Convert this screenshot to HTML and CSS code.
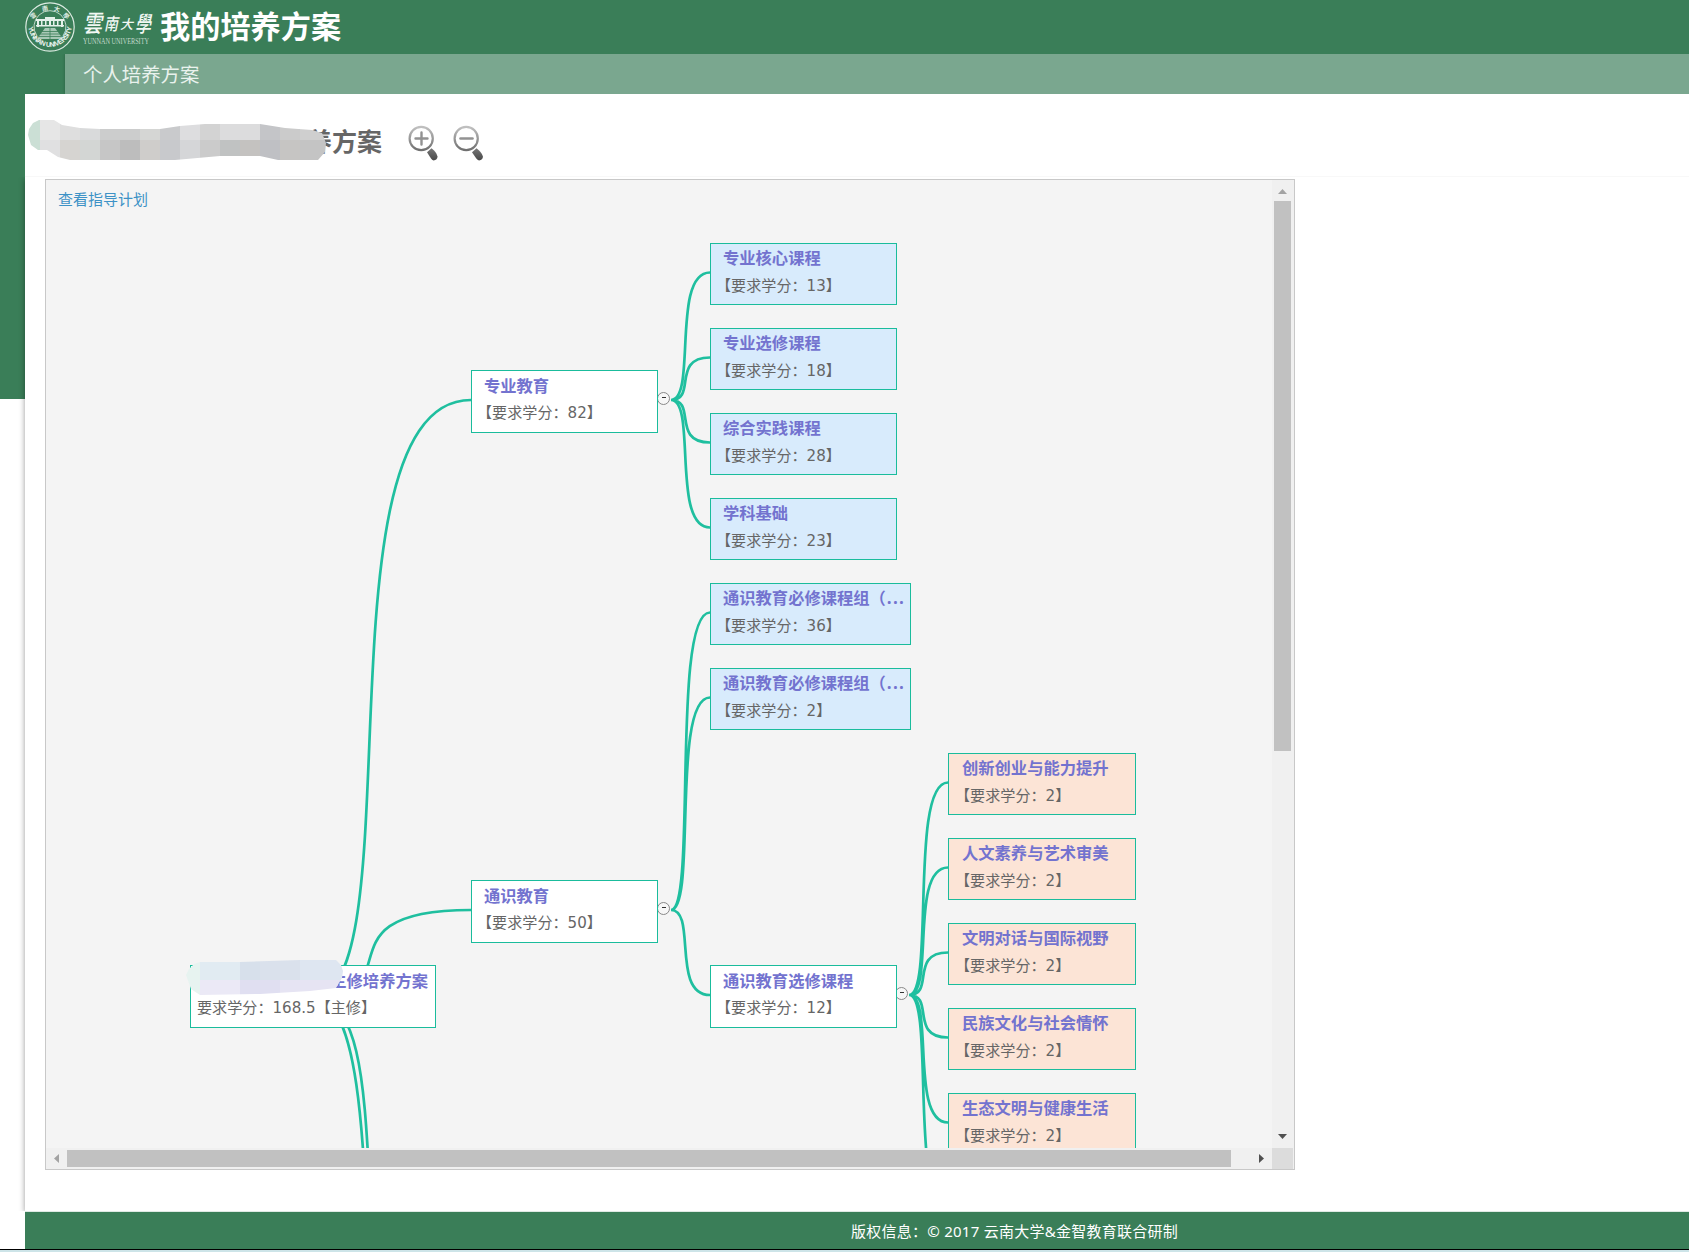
FILE: index.html
```html
<!DOCTYPE html>
<html lang="zh-CN">
<head>
<meta charset="utf-8">
<title>我的培养方案</title>
<link rel="stylesheet" href="styles.css">
</head>
<body>
<header class="header">
  <svg class="logo" width="132" height="54" viewBox="0 0 132 54">
    <defs>
      <path id="seal-low" d="M3.2 25A21.8 21.8 0 0 0 46.8 25"/>
    </defs>
    <g fill="none" stroke="#dcebe2">
      <circle cx="25" cy="27" r="24.2" stroke-width="1.2"/>
      <path d="M12 36A16 16 0 1 1 38 36" stroke-width=".8"/>
    </g>
    <g fill="#e4f0e9">
      <path d="M11 19h28v2H11zM20 17h10v2H20zM12 21h2v6h-2zm4 0h1.5v4H16zm4 0h1.5v4H20zm4 0h2v4h-2zm4 0h1.5v4H28zm4 0h1.5v4H32zm4 0h2v6h-2zM11 25h28v1.6H11z"/>
      <path d="M20 28h10l8 11H12z" opacity=".65"/>
    </g>
    <g stroke="#3a7e58" stroke-width=".8"><path d="M17 31.5h16M15 34h20M14 36.500h22M25 28v11"/></g>
    <text class="seal-en"><textPath href="#seal-low" startOffset="2" textLength="64">YUNNAN UNIVERSITY</textPath></text>
    <g class="seal-cn">
      <text x="5.500" y="18" transform="rotate(-40 8 16)">雲</text>
      <text x="17" y="11" transform="rotate(-12 19 9)">南</text>
      <text x="29" y="11" transform="rotate(14 31 9)">大</text>
      <text x="38" y="18" transform="rotate(38 41 16)">學</text>
    </g>
    <g class="brush">
      <text x="58" y="32" font-size="24" textLength="19" lengthAdjust="spacingAndGlyphs">雲</text>
      <text x="79" y="30" font-size="17" textLength="14" lengthAdjust="spacingAndGlyphs">南</text>
      <text x="95" y="28.500" font-size="13">大</text>
      <text x="110" y="32" font-size="22" textLength="16" lengthAdjust="spacingAndGlyphs">學</text>
    </g>
    <text class="logo-en" x="58" y="44" textLength="66" lengthAdjust="spacingAndGlyphs">YUNNAN UNIVERSITY</text>
  </svg>
  <h1 class="app-title">我的培养方案</h1>
</header>
<nav class="subnav"><span>个人培养方案</span></nav>

<main class="main">
  <div class="plan-head">
    <h2 class="plan-title">培养方案</h2>
    <svg class="mosaic" width="300" height="44" viewBox="27 118 300 44">
      <clipPath id="m1"><path d="M28 135L29 129 33 123 39 120H54L62 125 80 128 100 129H160L180 126 205 124H260L285 128 312 130 322 133 326 143 325 152 318 160H278L260 156H220L175 160H70L58 157 47 150H38L31 145Z"/></clipPath>
      <g clip-path="url(#m1)">
        <path fill="#cbdfd5" d="M20 120h20v40H20z"/>
        <path fill="#e6e6e6" d="M40 120h20v20H40z"/><path fill="#dedede" d="M60 120h20v20H60z"/><path fill="#d9dadb" d="M80 120h20v20H80z"/><path fill="#cccdcd" d="M100 120h40v20h-40z"/><path fill="#d5d6d4" d="M140 120h20v20h-20z"/><path fill="#c9cacc" d="M160 120h20v20h-20z"/><path fill="#dddddf" d="M180 120h20v20h-20z"/><path fill="#d3d3d3" d="M200 120h20v20h-20z"/><path fill="#dcdcdd" d="M220 120h40v20h-40z"/><path fill="#c4c5c8" d="M260 120h20v20h-20z"/><path fill="#cbcbcb" d="M280 120h20v20h-20z"/><path fill="#cfcfcf" d="M300 120h30v20h-30z"/>
        <path fill="#e0e0e1" d="M40 140h20v20H40z"/><path fill="#d6d4d1" d="M60 140h20v20H60z"/><path fill="#d3d6d4" d="M80 140h20v20H80z"/><path fill="#c6c6c6" d="M100 140h20v20h-20z"/><path fill="#bdbdbd" d="M120 140h20v20h-20z"/><path fill="#cfcdcb" d="M140 140h20v20h-20z"/><path fill="#c8c9cc" d="M160 140h20v20h-20z"/><path fill="#d5d6d8" d="M180 140h20v20h-20z"/><path fill="#cbcbcb" d="M200 140h20v20h-20z"/><path fill="#c0c2c2" d="M220 140h20v20h-20z"/><path fill="#c4c2c0" d="M240 140h20v20h-20z"/><path fill="#bfc0c4" d="M260 140h20v20h-20z"/><path fill="#c6c5c3" d="M280 140h20v20h-20z"/><path fill="#c4c4c4" d="M300 140h30v20h-30z"/>
      </g>
    </svg>
    <svg class="zoom" width="30" height="37" viewBox="0 0 30 37">
      <defs><linearGradient id="g" x1="0" y1="0" x2="0" y2="1"><stop offset="0" stop-color="#c0c0c0"/><stop offset="1" stop-color="#707070"/></linearGradient>
      <linearGradient id="h" x1="0" y1="0" x2="0" y2="1"><stop offset="0" stop-color="#777"/><stop offset="1" stop-color="#484848"/></linearGradient></defs>
      <circle cx="13.200" cy="13.500" r="11.600" fill="#fff" stroke="url(#g)" stroke-width="2.200"/>
      <path d="M7.500 13.500h12M13.500 7.500v12" stroke="#929292" stroke-width="2.400" stroke-linecap="round"/>
      <path d="M19 27.300L23.500 23.300Q28.500 27 29.500 31.500 29.500 35 25.500 35.500 24 35 23 33.500z" fill="url(#h)"/>
    </svg>
    <svg class="zoom" width="30" height="37" viewBox="0 0 30 37">
      <circle cx="13.200" cy="13.500" r="11.600" fill="#fff" stroke="url(#g)" stroke-width="2.200"/>
      <path d="M7.500 13.500h12" stroke="#929292" stroke-width="2.600" stroke-linecap="round"/>
      <path d="M19 27.300L23.500 23.300Q28.500 27 30 31.500 29.800 35 26 35.500 24.500 35 23.300 33.500z" fill="url(#h)"/>
    </svg>
  </div>
  <div class="plan-body">
    <section class="viewer">
      <div class="canvas">
        <a class="guide-link">查看指导计划</a>
        <svg class="links" width="1226" height="968" viewBox="46 180 1226 968">
          <path d="M312 997C417 997 312 400 471 400M312 997C417 997 312 910 471 910M312 997C417 997 312 1422 471 1422M312 997C417 997 312 1677 471 1677"/>
          <path d="M671 400C697 400 671 272.500 710 272.500M671 400C697 400 671 357.500 710 357.500M671 400C697 400 671 442.500 710 442.500M671 400C697 400 671 527.500 710 527.500"/>
          <path d="M671 910C697 910 671 612.500 710 612.500M671 910C697 910 671 697.500 710 697.500M671 910C697 910 671 995 710 995"/>
          <path d="M909 995C935 995 909 782.500 948 782.500M909 995C935 995 909 867.500 948 867.500M909 995C935 995 909 952.500 948 952.500M909 995C935 995 909 1037.500 948 1037.500M909 995C935 995 909 1122.500 948 1122.500M909 995C935 995 909 1207.500 948 1207.500"/>
        </svg>
        <i class="toggle" style="left:611px;top:212px"></i>
        <i class="toggle" style="left:611px;top:722px"></i>
        <i class="toggle" style="left:849px;top:807px"></i>
        <div class="node root" style="left:144px;top:785px"><b>主修培养方案</b><span>要求学分：168.5【主修】</span></div>
        <svg class="root-mosaic" width="158" height="36" viewBox="185 959 158 36">
          <clipPath id="m2"><path d="M186 975L189 969 194 964 200 962H240L300 960H336L341 965 343 971 342 978 336 988 310 991 260 994 200 995 191 989Z"/></clipPath>
          <g clip-path="url(#m2)">
            <path fill="#e7f3f0" d="M180 955h20v40h-20z"/><path fill="#e1ebf2" d="M200 955h40v25h-40z"/><path fill="#d7e0eb" d="M240 955h20v25h-20z"/><path fill="#dae1ec" d="M260 955h40v25h-40z"/><path fill="#dee6f1" d="M300 955h45v25h-45z"/>
            <path fill="#ebe9f6" d="M200 980h40v15h-40z"/><path fill="#e0dff1" d="M240 980h40v15h-40z"/><path fill="#e6e4f3" d="M280 980h65v15h-65z"/>
          </g>
        </svg>
        <div class="node" style="left:425px;top:190px"><b>专业教育</b><span>【要求学分：82】</span></div>
        <div class="node" style="left:425px;top:700px"><b>通识教育</b><span>【要求学分：50】</span></div>
        <div class="node" style="left:664px;top:785px"><b>通识教育选修课程</b><span>【要求学分：12】</span></div>
        <div class="node blue" style="left:664px;top:63px"><b>专业核心课程</b><span>【要求学分：13】</span></div>
        <div class="node blue" style="left:664px;top:148px"><b>专业选修课程</b><span>【要求学分：18】</span></div>
        <div class="node blue" style="left:664px;top:233px"><b>综合实践课程</b><span>【要求学分：28】</span></div>
        <div class="node blue" style="left:664px;top:318px"><b>学科基础</b><span>【要求学分：23】</span></div>
        <div class="node blue wide" style="left:664px;top:403px"><b>通识教育必修课程组（<em>...</em></b><span>【要求学分：36】</span></div>
        <div class="node blue wide" style="left:664px;top:488px"><b>通识教育必修课程组（<em>...</em></b><span>【要求学分：2】</span></div>
        <div class="node peach" style="left:902px;top:573px"><b>创新创业与能力提升</b><span>【要求学分：2】</span></div>
        <div class="node peach" style="left:902px;top:658px"><b>人文素养与艺术审美</b><span>【要求学分：2】</span></div>
        <div class="node peach" style="left:902px;top:743px"><b>文明对话与国际视野</b><span>【要求学分：2】</span></div>
        <div class="node peach" style="left:902px;top:828px"><b>民族文化与社会情怀</b><span>【要求学分：2】</span></div>
        <div class="node peach" style="left:902px;top:913px"><b>生态文明与健康生活</b><span>【要求学分：2】</span></div>
      </div>
      <div class="vbar">
        <svg width="21" height="21" viewBox="0 0 21 21"><path d="M6 14l4.500-5 4.500 5z" fill="#a3a3a3"/></svg>
        <div class="vthumb"></div>
        <svg class="end" width="21" height="21" viewBox="0 0 21 21"><path d="M6 7h9l-4.500 5z" fill="#505050"/></svg>
      </div>
      <div class="hbar">
        <svg width="21" height="21" viewBox="0 0 21 21"><path d="M13 6v9l-5-4.500z" fill="#a3a3a3"/></svg>
        <div class="hthumb"></div>
        <svg class="end" width="21" height="21" viewBox="0 0 21 21"><path d="M8 6v9l5-4.500z" fill="#505050"/></svg>
      </div>
      <div class="corner"></div>
    </section>
  </div>
</main>
<footer class="footer">版权信息：© 2017 云南大学&amp;金智教育联合研制</footer>
<div class="edge"></div>
</body>
</html>
```
FILE: styles.css
```css
* { box-sizing: border-box; }
body {
  margin: 0;
  height: 1252px;
  overflow: hidden;
  display: flex;
  flex-direction: column;
  background: linear-gradient(#3a7e58, #3a7e58) 0 0 / 100% 399px no-repeat #fff;
  font-family: "Noto Sans", "Noto Sans CJK SC", sans-serif;
}
svg { display: block; flex: none; }

.header { flex: none; height: 54px; padding-left: 25px; display: flex; align-items: center; }
.logo { overflow: visible; }
.seal-en { font: bold 6.8px "Liberation Sans", sans-serif; fill: #eef6f1; }
.seal-cn { font: bold 6px "Noto Sans CJK TC", sans-serif; fill: #e4f0e9; }
.brush { font-family: "Noto Sans CJK TC", sans-serif; font-weight: 500; font-style: italic; fill: #f2f8f4; }
.logo-en { font: 8px "Liberation Serif", serif; fill: #c3dacd; }
.app-title { margin: 0 0 0 3px; font-size: 30.2px; line-height: 44px; font-weight: 700; color: #fff; }

.subnav {
  flex: none;
  height: 40px;
  margin-left: 65px;
  padding-left: 18px;
  background: #7aa78f;
  box-shadow: 0 0 3px rgba(0, 0, 0, .25);
  color: #e9f2ed;
  font-size: 19.4px;
  line-height: 41px;
  clip-path: inset(0 0 0 -4px);
}

.main { flex: none; height: 1118px; margin-left: 25px; display: flex; flex-direction: column; background: #fff; border-bottom: 1px solid #dfe9e4; }
.plan-head { position: relative; height: 83px; display: flex; align-items: flex-start; padding: 31px 0 0 257px; border-bottom: 1px solid #f8f8f8; background: #fff; }
.plan-title { margin: -1px 0 0; width: 100px; font-size: 25px; line-height: 34px; font-weight: 700; color: #666; white-space: nowrap; }
.mosaic { position: absolute; left: 2px; top: 24px; }
.zoom { margin-left: 26px; }
.zoom + .zoom { margin-left: 15px; }
.plan-body { flex: 1; padding: 2px 0 0 20px; box-shadow: 0 2px 6px rgba(0, 0, 0, .4); background: #fff; clip-path: inset(0 0 0 -8px); }

.viewer {
  width: 1250px;
  height: 991px;
  border: 1px solid #c8c8c8;
  padding-right: 1px;
  display: grid;
  grid-template-columns: 1226px 21px;
  grid-template-rows: 968px 21px;
  background: #f0f0f0;
}
.canvas { position: relative; overflow: hidden; background: #f4f4f4; padding: 7px 12px; }
.guide-link { font-size: 15px; line-height: 24px; color: #3d92c6; display: block; }
.links { position: absolute; left: 0; top: 0; fill: none; stroke: #1fbf9f; stroke-width: 2.7; }

.node {
  position: absolute;
  width: 187px;
  height: 63px;
  padding: 3px 0 0 12px;
  border: 1px solid #1abc9c;
  background: #fff;
  white-space: nowrap;
}
.node b { display: block; font: bold 16.3px/24px "Open Sans", "Noto Sans CJK SC", sans-serif; color: #7373cf; }
.node em { font-style: normal; font-size: 17px; letter-spacing: 1.3px; margin-left: 1px; }
.node span { display: block; margin: 3px 0 0 -7px; font: 15.1px/24px "DejaVu Sans", "Noto Sans CJK SC", sans-serif; color: #666; }
.node.blue { height: 62px; padding: 2px 0 0 12px; background: #d8ebfc; }
.node.blue span, .node.peach span { margin: 4px 0 0 -7px; }
.node.wide { width: 201px; }
.node.peach { width: 188px; height: 62px; padding: 2px 0 0 13px; background: #fce4d6; }
.node.root { width: 246px; padding: 3px 7px 0 6px; }
.node.root b { text-align: right; }
.node.root span { margin-left: 0; }
.root-mosaic { position: absolute; left: 139px; top: 779px; }

.toggle { position: absolute; width: 13px; height: 13px; border: 1px solid #888; border-radius: 50%; background: #f6f6f6; }
.toggle::after { content: ""; display: block; width: 4px; height: 1px; margin: 4px 0 0 4px; background: #333; }

.vbar, .hbar { display: flex; background: #f0f0f0; }
.vbar { flex-direction: column; }
.vthumb { width: 17px; height: 550px; margin-left: 2px; background: #c1c1c1; }
.hthumb { height: 17px; width: 1164px; margin-top: 2px; background: #c1c1c1; }
.vbar .end { margin-top: auto; }
.hbar .end { margin-left: auto; }
.corner { background: #dcdcdc; }

.footer { flex: none; height: 37px; margin-left: 25px; padding-left: 315px; background: #3a7e58; color: #fff; font: 15px/38px "Noto Sans", "Noto Sans CJK SC", sans-serif; letter-spacing: .25px; text-align: center; }
.edge { flex: none; height: 3px; background: #cde4e8; border-top: 1px solid #000; }
```
